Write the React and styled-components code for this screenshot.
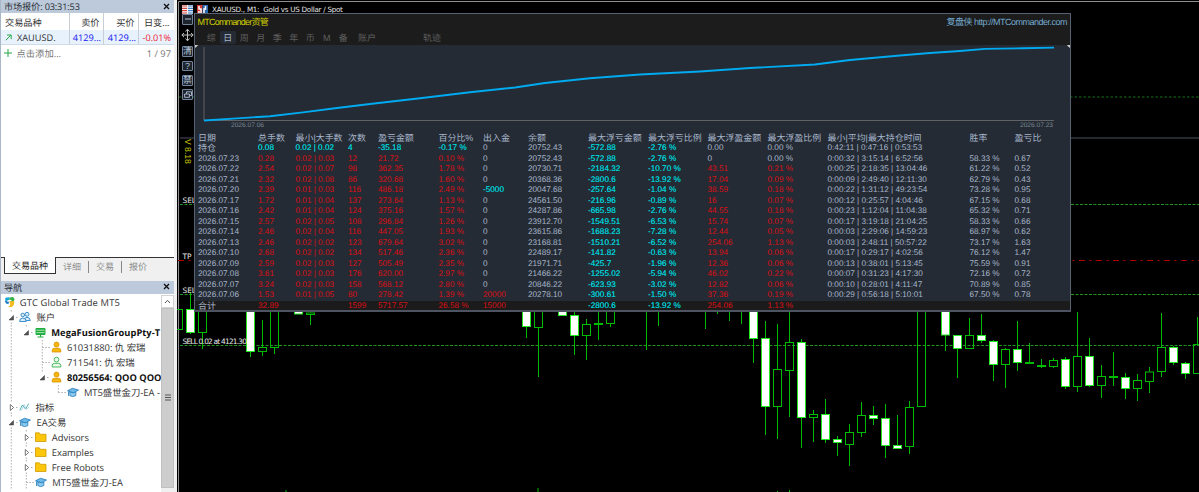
import React from "react";
import styled, { createGlobalStyle } from "styled-components";

const GlobalStyle = createGlobalStyle`
  * { box-sizing: border-box; }
  body {
    margin: 0;
    background: #000;
    overflow: hidden;
    text-rendering: geometricPrecision;
    font-family: "Open Sans", "Noto Sans CJK SC", sans-serif;
  }
  svg { display: block; flex: none; }
`;

const Desktop = styled.div`
  display: grid;
  grid-template-columns: 177px 1fr;
  width: 1199px;
  height: 492px;
  overflow: hidden;
  white-space: nowrap;
`;

/* ---------- left side ---------- */

const Sidebar = styled.div`
  display: flex;
  flex-direction: column;
  height: 492px;
  padding-right: 3px;
  border-left: 1px solid #a9b7c6;
  background: #f0f0f0;
  color: #222;
  font-size: 9.3px;
  overflow: hidden;
`;

const PaneTitle = styled.div`
  display: flex;
  align-items: center;
  justify-content: space-between;
  flex: none;
  height: 13px;
  padding: 0 4.5px 1px 3px;
  background: #bccadb;
  color: #2c3036;
  font-size: 9.2px;
  letter-spacing: -0.15px;
`;

const QuoteGrid = styled.div`
  display: grid;
  grid-template-columns: 68.5px 34px 35px 1fr;
  grid-template-rows: 17px 15px 17px;
  height: 245px;
  flex: none;
  background: #fff;
  border-bottom: 1px solid #333;
`;

const QuoteCell = styled.div`
  display: flex;
  align-items: center;
  justify-content: ${(p) => (p.$left ? "flex-start" : "flex-end")};
  padding: 0 ${(p) => p.$pad || 3}px 0 4px;
  color: ${(p) => p.$color || "#333"};
  background: ${(p) => (p.$active ? "#e8f2fd" : "transparent")};
  border-right: ${(p) => (p.$last ? "0" : "1px solid #c9ced6")};
  border-bottom: ${(p) => (p.$active ? "1px solid #cfdbe6" : "0")};
  font-size: ${(p) => p.$size || 9.2}px;
`;

const AddRow = styled.div`
  grid-column: 1 / -1;
  display: flex;
  align-items: center;
  justify-content: space-between;
  padding: 0 3px 1px;
  color: #777;
`;

const WithIcon = styled.div`
  display: flex;
  align-items: center;
  gap: ${(p) => p.$gap || 4}px;
`;

const TabBar = styled.div`
  display: flex;
  flex: none;
  height: 22.5px;
  padding-left: 3px;
  font-size: 9px;
  color: #8b8b8b;
`;

const Tab = styled.div`
  display: flex;
  align-items: center;
  justify-content: center;
  width: ${(p) => p.$width}px;
  height: ${(p) => (p.$active ? 17 : 16)}px;
  margin-top: ${(p) => (p.$active ? -1 : 0)}px;
  color: ${(p) => (p.$active ? "#222" : "inherit")};
  background: ${(p) => (p.$active ? "#fff" : "none")};
  border: ${(p) => (p.$active ? "1px solid #333" : "0")};
  border-top: 0;
`;

const TabDivider = styled.div`
  width: 1px;
  height: 12px;
  margin-top: 3px;
  background: #888;
`;

const TreeArea = styled.div`
  display: flex;
  flex: 1;
  min-height: 0;
  padding-top: 1px;
  background: #fff;
`;

const Tree = styled.div`
  width: 160px;
  padding-left: 2.7px;
  overflow: hidden;
`;

const TreeRow = styled.div`
  display: flex;
  align-items: center;
  height: 15px;
  color: #333;
  font-size: ${(p) => (p.$bold ? 9.3 : 9.4)}px;
  font-weight: ${(p) => (p.$bold ? 700 : 400)};
  ${(p) => p.$bold && "color: #111;"}
`;

const TreeLabel = styled.span`
  margin-left: 5px;
  letter-spacing: ${(p) => p.$spacing || 0}px;
`;

const ScrollBar = styled.div`
  display: flex;
  flex-direction: column;
  width: 13px;
  background: #f0f0f0;
`;

const ScrollButton = styled.div`
  display: flex;
  align-items: center;
  justify-content: center;
  height: 13px;
  background: #fff;
  border: 1px solid #d4d4d4;
`;

const ScrollThumb = styled.div`
  display: flex;
  align-items: center;
  justify-content: center;
  height: 180px;
  background: #cdcdcd;
  border: 1px solid #c0c0c0;
`;

/* ---------- chart ---------- */

const ChartWindow = styled.div`
  position: relative;
  overflow: hidden;
  background: #000;
  font-family: "Liberation Sans", "Noto Sans CJK SC", sans-serif;
`;

const Backdrop = styled.svg`
  position: absolute;
  inset: 0;
`;

const ChartTitle = styled.div`
  position: relative;
  display: flex;
  align-items: center;
  gap: 4px;
  height: 9px;
  margin: 5px 0 0 5px;
  color: #e8e8e8;
  font: 7.2px "DejaVu Sans", sans-serif;
  letter-spacing: -0.27px;
  white-space: pre;
`;

const ToolStrip = styled.div`
  position: relative;
  display: flex;
  flex-direction: column;
  align-items: center;
  width: 11px;
  margin-left: 5px;
`;

const ToolBox = styled.div`
  display: flex;
  align-items: center;
  justify-content: center;
  width: 11.5px;
  height: 10.7px;
  margin-bottom: 3.6px;
  border: 1px solid #74849c;
  border-radius: 1px;
  background: #1d242e;
  color: #b4c3d8;
  font-size: 9px;
  line-height: 9px;
`;

const MoveIcon = styled.svg`
  margin: -0.5px 0 4.7px;
`;

const Version = styled.div`
  writing-mode: vertical-rl;
  margin-top: 35px;
  height: 24px;
  width: 9px;
  color: #c8c800;
  font-size: 8.6px;
  line-height: 9px;
`;

const Panel = styled.div`
  position: absolute;
  left: 17px;
  top: 13px;
  width: 877px;
  height: 299px;
  display: flex;
  flex-direction: column;
  overflow: hidden;
  border: 1px solid #566172;
  border-bottom: 2px solid #4d5361;
  background: #242b34;
`;

const PanelHead = styled.div`
  height: 31px;
  flex: none;
  background: #1c1c1c;
`;

const HeadLine = styled.div`
  display: flex;
  justify-content: space-between;
  align-items: center;
  height: 15px;
  padding: 0 3px 0 2.5px;
  font-size: 9px;
  color: #d0d000;
`;

const Brand = styled.span`
  letter-spacing: -0.78px;
`;

const Site = styled.span`
  color: #74abcf;
  letter-spacing: -0.5px;
`;

const Periods = styled.div`
  display: flex;
  align-items: center;
  height: 16px;
  padding: 1px 0 0 8px;
  color: #5e5e5e;
  font-size: 9px;
`;

const Period = styled.span`
  display: flex;
  align-items: center;
  justify-content: center;
  width: ${(p) => p.$width || 16.5}px;
  height: 13px;
  ${(p) => p.$active && "color: #a9b6c8; background: #242b34; border-radius: 2px;"}
`;

const Dates = styled.div`
  display: flex;
  justify-content: space-between;
  padding: 0 17px 0 36px;
  height: 11.3px;
  margin-top: -0.7px;
  flex: none;
  color: #7d8896;
  font-size: 6.6px;
  line-height: 9px;
`;

const Row = styled.div`
  display: grid;
  grid-template-columns: 60px 37.5px 52.5px 30px 60.5px 44.5px 45px 60px 60px 59.5px 60px 60px 142px 45px 1fr;
  flex: none;
  height: ${(p) => (p.$total ? 9.4 : 10.5)}px;
  padding-left: 3px;
  line-height: ${(p) => (p.$total ? 10 : 10.5)}px;
  font-size: ${(p) => (p.$header ? 8.95 : 8.2)}px;
  color: #a8b6cb;
  background: ${(p) => (p.$total ? "#1b1b1b" : "none")};
`;

const Cell = styled.span`
  color: ${(p) => ({ up: "#de0e14", down: "#00d4da" }[p.$tone] || "inherit")};
  text-shadow: ${(p) => (p.$tone === "down" ? "0 0 0.5px #00b4bc" : "none")};
  font-size: ${(p) => (p.$cjk ? "9px" : "inherit")};
`;

const candles = [
  // x, wick top, wick bottom, body top, body bottom, filled
  [178.5, 309, 330, 309, 330, 0], [190.5, 292, 334, 309, 333, 1],
  [202.5, 300, 349, 300, 333, 0], [250.5, 300, 357, 300, 352, 1],
  [262.5, 320, 356, 347, 352, 0], [274.5, 300, 354, 300, 348, 0],
  [298.5, 300, 314, 300, 314.5, 1], [310.5, 311, 325, 312.5, 315, 0],
  [526.5, 300, 338, 300, 327, 1], [538.5, 300, 377, 300, 328, 0],
  [562.5, 300, 316, 300, 316, 1], [574.5, 300, 355, 315, 336, 1],
  [586.5, 319, 360, 324, 336, 0], [598.5, 300, 340, 323, 325, 0],
  [610.5, 300, 327, 300, 324, 0], [646.5, 300, 350], [658.5, 300, 326],
  [705.5, 300, 329], [717.5, 300, 314], [729.5, 300, 321], [741.5, 300, 324],
  [753.5, 300, 363, 300, 339, 1], [765.5, 321, 435, 338, 407, 1],
  [777.5, 324, 439, 369, 407, 0], [789.5, 300, 417, 342, 371, 0],
  [801.5, 339, 448, 342, 418, 1], [813.5, 410, 442, 414, 418, 0],
  [825.5, 399, 443, 414, 440, 1], [837.5, 436, 456, 439, 443, 1],
  [849.5, 424, 466, 432, 445, 0], [861.5, 402, 437, 415, 433, 0],
  [873.5, 406, 425, 415, 419, 1], [885.5, 404, 458, 418, 446, 1],
  [897.5, 415, 449, 445, 449, 1], [909.5, 401, 454, 407, 447, 0],
  [921.5, 300, 407, 300, 407, 0], [945.5, 300, 351, 300, 335.5, 1],
  [957.5, 335, 378, 335, 349, 1], [969.5, 318, 349, 335, 349, 0],
  [981.5, 314, 343, 335, 341, 1], [993.5, 340, 381, 341, 365, 1],
  [1005.5, 348, 388, 349, 365, 0], [1017.5, 321, 371, 349, 363, 1],
  [1029.5, 343, 364, 362, 364, 0], [1041.5, 359, 368, 365, 367, 0],
  [1053.5, 358, 368, 360, 367, 0], [1065.5, 357, 389, 359, 387, 1],
  [1077.5, 312, 392, 356, 387, 0], [1089.5, 338, 387, 356, 386, 1],
  [1101.5, 365, 398, 376, 386, 0], [1113.5, 352, 386, 376, 378, 0],
  [1125.5, 373, 399, 377, 389, 1], [1137.5, 374, 401, 380, 389, 0],
  [1149.5, 367, 393, 371.5, 382, 0], [1161.5, 313, 377, 347, 372, 0],
  [1173.5, 346, 365, 347, 363, 1], [1185.5, 362, 379, 363, 374, 1],
  [1197.5, 317, 374, 344, 374, 0],
  [286, 490, 492], [538, 488, 492], [777.5, 491, 492], [789.5, 490, 492],
];

function Candle({ data }) {
  const [x, top, bottom, open, close, filled] = data;
  // hollow bodies leave the wick out of their inside
  const through = filled || open === undefined;
  return (
    <g stroke="#00bc00" strokeWidth="1">
      {through && <line x1={x} x2={x} y1={top} y2={bottom} />}
      {!through && <path d={`M${x} ${top}V${open}M${x} ${close}V${bottom}`} />}
      {open !== undefined && (
        <rect
          x={x - 4}
          y={open + 0.5}
          width="8"
          height={Math.max(close - open - 1, 0.6)}
          fill={filled ? "#fff" : "none"}
          stroke={filled ? "#22e822" : "#00bc00"}
        />
      )}
    </g>
  );
}

const orderText = { fill: "#e8e8e8", fontSize: 7.4, fontFamily: "DejaVu Sans" };

function Market() {
  return (
    <Backdrop width="1022" height="492" viewBox="177 0 1022 492">
      <path d="M178.5 492V1.5H1199" fill="none" stroke="#8f8f8f" />
      <g stroke="#1f951f" strokeDasharray="3 1.5">
        <path d="M179 97H1199" stroke="#1a701a" strokeDasharray="2.5 2" />
        <path d="M180 204.5H1199M180 294.5H1199M180 345.5H1199" />
      </g>
      <path d="M178 260.5H1199" stroke="#b00000" strokeDasharray="6 4.5 2 4.5" />
      <path d="M180 138H1199" stroke="#4a525e" />
      {candles.map((c, i) => (
        <Candle key={i} data={c} />
      ))}
      <text x="182.5" y="203" {...orderText}>SEL</text>
      <text x="182.5" y="258.5" {...orderText}>TP</text>
      <text x="182.5" y="293" {...orderText}>SEL</text>
      <text x="182.5" y="344" textLength="64.5" {...orderText}>SELL 0.02 at 4121.30</text>
      <rect x="247" y="330" width="7" height="21" fill="#fff" />
    </Backdrop>
  );
}

function Equity() {
  return (
    <svg width="875" height="77" viewBox="195 45 875 77">
      <path d="M204 47V120.5H1054" fill="none" stroke="#606265" />
      <polyline
        fill="none"
        stroke="#00aaf0"
        strokeWidth="1.9"
        points="204,120.5 237,118.4 270,116.2 303,112.4 337,108 370,104 420,98.2 470,92.3 515,87.5 545,83 590,78.3 640,74.5 700,71.5 750,68 815,64.5 850,60 900,55.5 930,53 960,51 985,48.9 1023,48.3 1054,47.6"
      />
      <path d="M195 43l3 2.5l-3 2.5zM1070 43l-3 2.5l3 2.5z" fill="#ccc" />
    </svg>
  );
}

const headers = ["日期", "总手数", "最小|大手数", "次数", "盈亏金额", "百分比%", "出入金", "余额", "最大浮亏金额", "最大浮亏比例", "最大浮盈金额", "最大浮盈比例", "最小|平均|最大持仓时间", "胜率", "盈亏比"];

const rows = [
  ["持仓", "0.08", "0.02 | 0.02", "4", "-35.18", "-0.17 %", "0", "20752.43", "-572.88", "-2.76 %", "0.00", "0.00 %", "0:42:11 | 0:47:16 | 0:53:53", "", ""],
  ["2026.07.23", "0.28", "0.02 | 0.03", "12", "21.72", "0.10 %", "0", "20752.43", "-572.88", "-2.76 %", "0", "0.00 %", "0:00:32 | 3:15:14 | 6:52:56", "58.33 %", "0.67"],
  ["2026.07.22", "2.54", "0.02 | 0.07", "98", "362.35", "1.78 %", "0", "20730.71", "-2184.32", "-10.70 %", "43.51", "0.21 %", "0:00:25 | 2:18:35 | 13:04:46", "61.22 %", "0.52"],
  ["2026.07.21", "2.32", "0.02 | 0.08", "86", "320.68", "1.60 %", "0", "20368.36", "-2800.6", "-13.92 %", "17.04", "0.09 %", "0:00:09 | 2:49:40 | 12:11:30", "62.79 %", "0.43"],
  ["2026.07.20", "2.39", "0.01 | 0.03", "116", "486.18", "2.49 %", "-5000", "20047.68", "-257.64", "-1.04 %", "38.59", "0.18 %", "0:00:22 | 1:31:12 | 49:23:54", "73.28 %", "0.95"],
  ["2026.07.17", "1.72", "0.01 | 0.04", "137", "273.64", "1.13 %", "0", "24561.50", "-216.96", "-0.89 %", "16", "0.07 %", "0:00:12 | 0:25:57 | 4:04:46", "67.15 %", "0.68"],
  ["2026.07.16", "2.42", "0.01 | 0.04", "124", "375.16", "1.57 %", "0", "24287.86", "-665.98", "-2.76 %", "44.55", "0.18 %", "0:00:23 | 1:12:04 | 11:04:38", "65.32 %", "0.71"],
  ["2026.07.15", "2.57", "0.02 | 0.05", "108", "296.84", "1.26 %", "0", "23912.70", "-1549.51", "-6.53 %", "15.74", "0.07 %", "0:00:17 | 3:19:18 | 21:04:25", "58.33 %", "0.66"],
  ["2026.07.14", "2.46", "0.02 | 0.04", "116", "447.05", "1.93 %", "0", "23615.86", "-1688.23", "-7.28 %", "12.44", "0.05 %", "0:00:03 | 2:29:06 | 14:59:23", "68.97 %", "0.62"],
  ["2026.07.13", "2.46", "0.02 | 0.02", "123", "679.64", "3.02 %", "0", "23168.81", "-1510.21", "-6.52 %", "254.06", "1.13 %", "0:00:03 | 2:48:11 | 50:57:22", "73.17 %", "1.63"],
  ["2026.07.10", "2.68", "0.02 | 0.02", "134", "517.46", "2.36 %", "0", "22489.17", "-141.82", "-0.63 %", "13.94", "0.06 %", "0:00:17 | 0:29:17 | 4:02:56", "76.12 %", "1.47"],
  ["2026.07.09", "2.59", "0.02 | 0.03", "127", "505.49", "2.35 %", "0", "21971.71", "-425.7", "-1.96 %", "12.36", "0.06 %", "0:00:13 | 0:38:01 | 5:13:45", "75.59 %", "0.91"],
  ["2026.07.08", "3.61", "0.02 | 0.03", "176", "620.00", "2.97 %", "0", "21466.22", "-1255.02", "-5.94 %", "46.02", "0.22 %", "0:00:07 | 0:31:23 | 4:17:30", "72.16 %", "0.72"],
  ["2026.07.07", "3.24", "0.02 | 0.03", "158", "568.12", "2.80 %", "0", "20846.22", "-623.93", "-3.02 %", "12.82", "0.06 %", "0:00:10 | 0:28:01 | 4:11:47", "70.89 %", "0.85"],
  ["2026.07.06", "1.53", "0.01 | 0.05", "80", "278.42", "1.39 %", "20000", "20278.10", "-300.61", "-1.50 %", "37.36", "0.19 %", "0:00:29 | 0:56:18 | 5:10:01", "67.50 %", "0.78"],
  ["合计", "32.89", "", "1599", "5717.57", "26.58 %", "15000", "", "-2800.6", "-13.92 %", "254.06", "1.13 %", "", "", ""],
];

function tone(value, col, row) {
  if (col === 0 || col === 7 || col > 11) return "";
  if (value.startsWith("-") || (row === 0 && col < 4)) return "down";
  return parseFloat(value) === 0 ? "" : "up";
}

function StatsTable() {
  return (
    <div>
      <Row $header>
        {headers.map((h) => (
          <Cell key={h}>{h}</Cell>
        ))}
      </Row>
      {rows.map((row, r) => (
        <Row key={r} $total={r === rows.length - 1}>
          {row.map((v, c) => (
            <Cell key={c} $tone={tone(v, c, r)} $cjk={c === 0 && v.length === 2}>
              {v}
            </Cell>
          ))}
        </Row>
      ))}
    </div>
  );
}

/* ---------- icons ---------- */

const Close = () => (
  <svg width="7" height="7" viewBox="0 0 7 7">
    <path d="M1 1l5 5M6 1l-5 5" stroke="#111" strokeWidth="1.3" />
  </svg>
);

const icons = {
  logo: (
    <svg width="11" height="12" viewBox="0 0 11 12">
      <path d="M1 2.5Q3 .5 6 1.5L5 4Q3 3.5 3 5.5Q1 5 1 2.5z" fill="#19a7d8" />
      <path d="M6 1.5Q10.5 0 10.5 4Q9 7 6 5.5L8 4L5 3.8z" fill="#36b34a" />
      <path d="M1 4.5Q1 8 4.5 8L5 5.5Q3 6 1 4.5z" fill="#1476c8" />
      <path d="M5 5.5L10 5Q11 9 7.5 11L4 11Q8 9 5 5.5z" fill="#f3b91d" />
    </svg>
  ),
  group: (
    <svg width="12" height="12" viewBox="0 0 12 12" fill="#d5ecfb" stroke="#2f86c6" strokeWidth=".9">
      <circle cx="8" cy="3.3" r="2" />
      <path d="M5 9.5Q5 6.3 8 6.3T11.3 9.5z" />
      <circle cx="3.8" cy="4" r="1.8" />
      <path d="M.6 10.5Q.6 7 3.8 7T7.2 10.5z" />
    </svg>
  ),
  server: (
    <svg width="11" height="11" viewBox="0 0 11 11">
      <rect x=".5" y="1" width="10" height="7" rx="1" fill="#20ad3e" />
      <path d="M1.5 3.2h8M1.5 5.6h8" stroke="#c9f2d1" strokeWidth=".8" />
      <path d="M5.5 8v2M2.5 10h6" stroke="#20ad3e" />
    </svg>
  ),
  userGold: (
    <svg width="11" height="12" viewBox="0 0 11 12" fill="#f6b70c" stroke="#d79200" strokeWidth=".8">
      <circle cx="5.5" cy="3.6" r="2.5" />
      <path d="M1.2 11V9.5Q1.2 7.3 3.5 7.3H7.5Q9.8 7.3 9.8 9.5V11z" />
    </svg>
  ),
  userGreen: (
    <svg width="11" height="12" viewBox="0 0 11 12" fill="#e9fbea" stroke="#37b24d" strokeWidth=".9">
      <circle cx="5.5" cy="3.6" r="2.4" />
      <path d="M1.2 11V9.5Q1.2 7.3 3.5 7.3H7.5Q9.8 7.3 9.8 9.5V11z" />
    </svg>
  ),
  cap: (
    <svg width="12" height="11" viewBox="0 0 12 11">
      <path d="M2.8 5v3.6Q5.5 10.6 8.8 8.6V5z" fill="#8ecbf0" stroke="#1f78b8" strokeWidth=".8" />
      <path d="M.5 3.8L5.5 1.3L11.5 3L6.5 5.9z" fill="#6db9ea" stroke="#1f78b8" strokeWidth=".8" />
      <path d="M1.5 4.5V9" stroke="#1f78b8" strokeWidth=".8" />
    </svg>
  ),
  wave: (
    <svg width="11" height="10" viewBox="0 0 11 10" fill="none">
      <path d="M.8 8.5L3.3 3L6.5 7L9.8 1.5" stroke="#4fb7ad" strokeWidth="1" />
      <path d="M2.5 8.5L5 2.5L7.3 7.5L10 5" stroke="#8db7e4" strokeWidth=".6" />
    </svg>
  ),
  folder: (
    <svg width="11.5" height="10" viewBox="0 0 11.5 10">
      <path d="M.5 9.5V.8H4.3L5.3 2.3H11V9.5z" fill="#fbc60c" stroke="#d19a00" strokeWidth=".8" />
    </svg>
  ),
};

// one tree column: "|" line, "t" branch, "L" last branch, "o"/"c" open or closed node
function Guide({ kind }) {
  const node = kind[0] === "o" || kind[0] === "c";
  return (
    <svg width="15.8" height="15" viewBox="0 0 15.8 15">
      <g stroke="#a6a6a6" strokeWidth=".9" strokeDasharray="1.5 1.5" fill="none">
        {(kind === "|" || kind === "t") && <path d="M7.3 0V15" />}
        {kind === "L" && <path d="M7.3 0V7.5" />}
        {kind !== "|" && kind !== " " && <path d={node ? "M12 7.5H15" : "M7.3 7.5H15"} />}
        {node && <path d="M7.3 0V3" />}
        {node && kind !== "o-" && <path d="M7.3 12.5V15" />}
      </g>
      {kind[0] === "o" && <path d="M9.5 5.5V10H5z" fill="#555" stroke="#333" strokeWidth=".5" />}
      {kind[0] === "c" && <path d="M6.3 4.5L9.6 7.5L6.3 10.5z" fill="#fff" stroke="#555" strokeWidth=".8" />}
    </svg>
  );
}

const tree = [
  { guides: [], icon: "logo", label: "GTC Global Trade MT5", spacing: 0.14 },
  { guides: ["o"], icon: "group", label: "账户" },
  { guides: ["|", "o-"], icon: "server", label: "MegaFusionGroupPty-T", bold: true, spacing: 0.05 },
  { guides: ["|", " ", "t"], icon: "userGold", label: "61031880: 仇 宏瑞" },
  { guides: ["|", " ", "t"], icon: "userGreen", label: "711541: 仇 宏瑞" },
  { guides: ["|", " ", "o-"], icon: "userGold", label: "80256564: QOO QOO", bold: true },
  { guides: ["|", " ", " ", "L"], icon: "cap", label: "MT5盛世金刀-EA -" },
  { guides: ["c"], icon: "wave", label: "指标" },
  { guides: ["o"], icon: "cap", label: "EA交易" },
  { guides: ["|", "c"], icon: "folder", label: "Advisors" },
  { guides: ["|", "c"], icon: "folder", label: "Examples" },
  { guides: ["|", "c"], icon: "folder", label: "Free Robots" },
  { guides: ["|", "t"], icon: "cap", label: "MT5盛世金刀-EA" },
];

function MarketWatch() {
  return (
    <>
      <PaneTitle>
        市场报价: 03:31:53
        <Close />
      </PaneTitle>
      <QuoteGrid>
        <QuoteCell $left>交易品种</QuoteCell>
        <QuoteCell>卖价</QuoteCell>
        <QuoteCell>买价</QuoteCell>
        <QuoteCell $last $pad={4.5}>日变...</QuoteCell>
        <QuoteCell $left $active>
          <WithIcon $gap={5}>
            <svg width="7" height="7" viewBox="0 0 7 7">
              <path d="M.8 6.2L6 1M2 1h4.2v4.2" fill="none" stroke="#27a844" />
            </svg>
            XAUUSD.
          </WithIcon>
        </QuoteCell>
        <QuoteCell $active $color="#1818f0" $pad={1.5}>4129...</QuoteCell>
        <QuoteCell $active $color="#1818f0" $pad={1.5}>4129...</QuoteCell>
        <QuoteCell $active $color="#f01830" $last $size={9.1}>-0.01%</QuoteCell>
        <AddRow>
          <WithIcon $gap={4.5}>
            <svg width="8" height="8" viewBox="0 0 8 8">
              <path d="M4 0v8M0 4h8" stroke="#27a844" />
            </svg>
            点击添加...
          </WithIcon>
          <span>1 / 97</span>
        </AddRow>
      </QuoteGrid>
      <TabBar>
        <Tab $active $width={52}>交易品种</Tab>
        <Tab $width={32}>详细</Tab>
        <TabDivider />
        <Tab $width={32}>交易</Tab>
        <TabDivider />
        <Tab $width={32}>报价</Tab>
      </TabBar>
    </>
  );
}

function Navigator() {
  return (
    <>
      <PaneTitle>
        导航
        <Close />
      </PaneTitle>
      <TreeArea>
        <Tree>
          {tree.map((item, i) => (
            <TreeRow key={i} $bold={item.bold}>
              {item.guides.map((g, n) => (
                <Guide key={n} kind={g} />
              ))}
              {icons[item.icon]}
              <TreeLabel $spacing={item.spacing}>{item.label}</TreeLabel>
            </TreeRow>
          ))}
        </Tree>
        <ScrollBar>
          <ScrollButton>
            <svg width="7" height="5" viewBox="0 0 7 5">
              <path d="M1 4L3.5 1.3L6 4" fill="none" stroke="#555" />
            </svg>
          </ScrollButton>
          <ScrollThumb>
            <svg width="6" height="7" viewBox="0 0 6 7">
              <path d="M0 1h6M0 3.5h6M0 6h6" stroke="#555" />
            </svg>
          </ScrollThumb>
        </ScrollBar>
      </TreeArea>
    </>
  );
}

function Tools() {
  return (
    <ToolStrip>
      <ToolBox>
        <svg width="6" height="2"><path d="M0 1h6" stroke="#b4c3d8" /></svg>
      </ToolBox>
      <MoveIcon width="13" height="14" viewBox="0 0 13 14">
        <path d="M6.5 1.5V12.5M1 7H12" stroke="#c2c2c2" strokeWidth="1.1" />
        <path d="M4.5 3.5L6.5 1.2L8.5 3.5M4.5 10.5L6.5 12.8L8.5 10.5M3 5L.8 7L3 9M10 5L12.2 7L10 9" fill="none" stroke="#c2c2c2" />
      </MoveIcon>
      <ToolBox>清</ToolBox>
      <ToolBox>?</ToolBox>
      <ToolBox>禁</ToolBox>
      <ToolBox>
        <svg width="8" height="7" viewBox="0 0 8 7" fill="none" stroke="#b4c3d8" strokeWidth=".9">
          <path d="M2.5 3V.8H7.5V4.5H5.5M.6 3H5.4V6.3H.6z" />
        </svg>
      </ToolBox>
      <Version>V 8.18</Version>
    </ToolStrip>
  );
}

const periods = ["综", "日", "周", "月", "季", "年", "币", "M", "备"];

export default function App() {
  return (
    <Desktop>
      <GlobalStyle />
      <Sidebar>
        <MarketWatch />
        <Navigator />
      </Sidebar>
      <ChartWindow>
        <Market />
        <ChartTitle>
          <svg width="11" height="9" viewBox="0 0 11 9">
            <path d="M0 0h11v9H0z" fill="#f3f3f3" />
            <path d="M0 1h5M0 3.3h5M0 5.6h5M0 8h5" stroke="#d8483c" strokeWidth="1.2" />
            <path d="M6 1h5M6 3.3h5M6 5.6h5M6 8h5" stroke="#3f7fc4" strokeWidth="1.2" />
          </svg>
          <svg width="11" height="9" viewBox="0 0 11 9">
            <path d="M0 0h5.5v9H0z" fill="#d33a34" />
            <path d="M5.5 0H11v9H5.5z" fill="#2f69ad" />
            <path d="M2 1v3h2v4M8.5 1v3H7v4M2 6v2" fill="none" stroke="#fff" strokeWidth="1.5" />
          </svg>
          <span>XAUUSD., M1:  Gold vs US Dollar / Spot</span>
        </ChartTitle>
        <Tools />
        <Panel>
          <PanelHead>
            <HeadLine>
              <Brand>MTCommander资管</Brand>
              <Site>复盘侠 http://MTCommander.com</Site>
            </HeadLine>
            <Periods>
              {periods.map((p) => (
                <Period key={p} $active={p === "日"}>{p}</Period>
              ))}
              <Period $width={31}>账户</Period>
              <Period $width={99}>轨迹</Period>
            </Periods>
          </PanelHead>
          <Equity />
          <Dates>
            <span>2026.07.06</span>
            <span>2026.07.23</span>
          </Dates>
          <StatsTable />
        </Panel>
      </ChartWindow>
    </Desktop>
  );
}
